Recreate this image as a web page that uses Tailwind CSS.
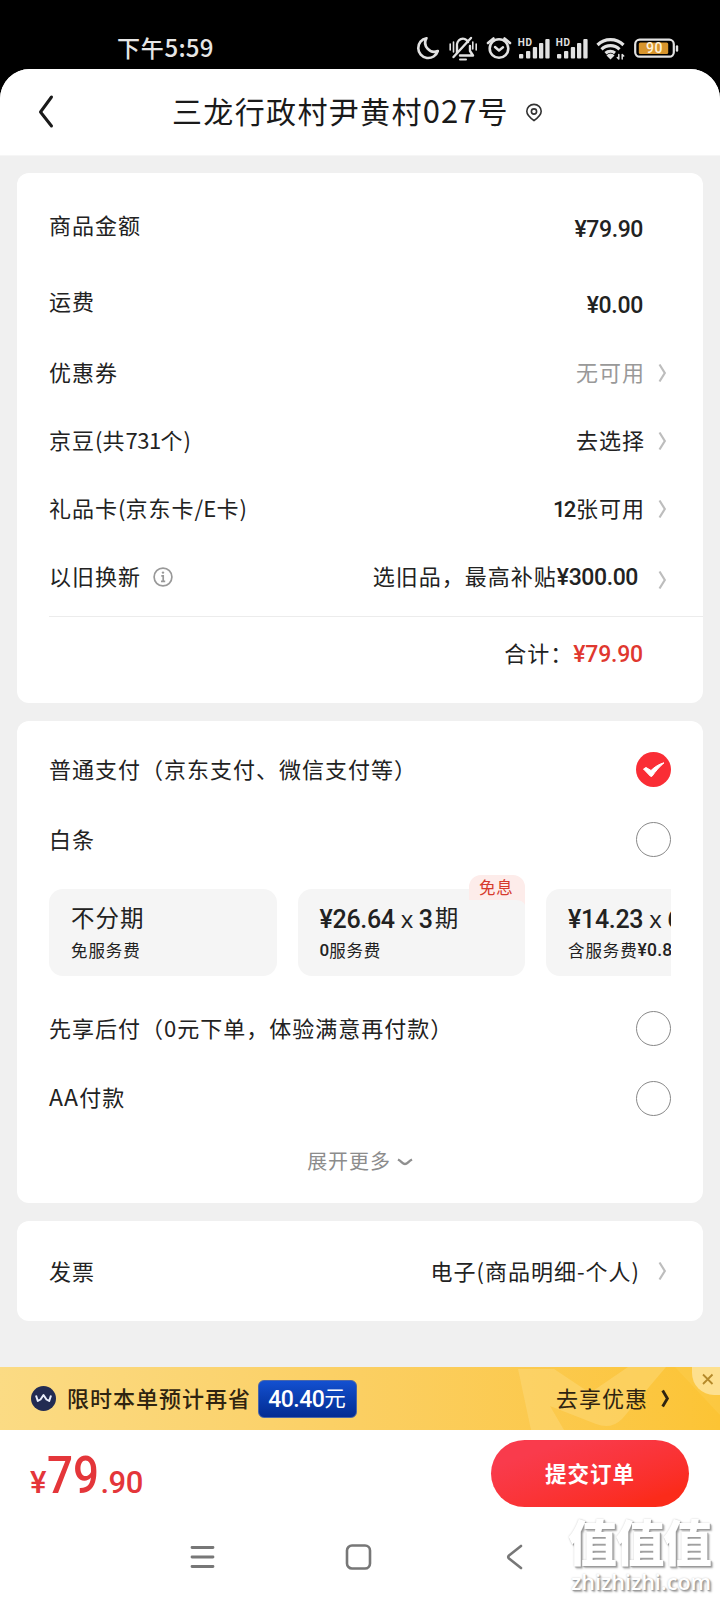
<!DOCTYPE html>
<html lang="zh-CN">
<head>
<meta charset="utf-8">
<title>提交订单</title>
<script src="https://cdn.jsdelivr.net/npm/@tailwindcss/browser@4"></script>
</head>
<body class="bg-black">
<svg class="hidden">
  <symbol id="chev" viewBox="0 0 9 20"><path d="M1.500 1.500 L6.800 10 L1.500 18.500" fill="none" stroke="currentColor" stroke-width="2.200"/></symbol>
</svg>
<div class="relative w-[720px] h-[1600px] overflow-hidden flex flex-col bg-black text-[#222] text-[22px] tracking-[1px] leading-none whitespace-nowrap font-['Noto_Sans_CJK_SC',sans-serif]">

  <!-- status bar -->
  <div class="h-[69px] shrink-0 flex items-start justify-between pl-[117px] pr-[30px] pt-[30px]">
    <div class="h-[34px] flex items-center text-[#e6e6e6] text-[23px] tracking-[0.8px] font-medium">下午<span class="text-[24px] tracking-[0.200px]">5:59</span></div>
    <svg class="w-[280px] h-[40px]" viewBox="410 30 280 40" fill="none" stroke="#e2e2e2" stroke-width="2.6" stroke-linecap="round" stroke-linejoin="round">
      <path d="M426.5 38.2 A10 10 0 1 0 437.8 51 A9 9 0 0 1 426.5 38.2Z"/>
      <path d="M457 53 v-6 a6 7 0 0 1 11 -5 M470 46 v5 l3 4.500 h-13" stroke-width="2.400"/>
      <path d="M471 38 L453.500 57" stroke-width="2.400"/>
      <path d="M460 59.500 h6" stroke-width="2"/>
      <path d="M450.200 44 v6 M453.500 42 v10 M472.800 42 v7 M476.200 44 v6" stroke-width="1.600"/>
      <circle cx="499" cy="48.500" r="9.300"/>
      <path d="M495 47 L499 50.500 L503 47.300" stroke-width="2.400"/>
      <path d="M488 43 L493.500 38.500 M510 43 L504.500 38.500"/>
      <g stroke="none" fill="#e2e2e2">
        <text x="517.800" y="46" font-family="Roboto, sans-serif" font-size="10" font-weight="700" letter-spacing="0.600">HD</text>
        <rect x="519" y="54" width="4.300" height="4.500" rx="1"/><rect x="526" y="51" width="4.300" height="7.500" rx="1"/><rect x="532.800" y="47" width="4.300" height="11.500" rx="1"/><rect x="539" y="43" width="4.300" height="15.500" rx="1"/><rect x="545.300" y="39" width="4.300" height="19.500" rx="1"/>
        <text x="555.800" y="46" font-family="Roboto, sans-serif" font-size="10" font-weight="700" letter-spacing="0.600">HD</text>
        <rect x="557" y="54" width="4.300" height="4.500" rx="1"/><rect x="564" y="51" width="4.300" height="7.500" rx="1"/><rect x="570.800" y="47" width="4.300" height="11.500" rx="1"/><rect x="577" y="43" width="4.300" height="15.500" rx="1"/><rect x="583.300" y="39" width="4.300" height="19.500" rx="1"/>
      </g>
      <path d="M597.500 45 A18.500 18.500 0 0 1 623.500 45 M601.500 49.300 A13 13 0 0 1 619.500 49.300 M605.500 53.300 A7.500 7.500 0 0 1 615 53" stroke-width="3.200" stroke-linecap="butt"/>
      <path d="M606.500 55.500 L610.500 59.500 L614.500 55.500 A5 5 0 0 0 606.500 55.500Z" fill="#e2e2e2" stroke="none"/>
      <path d="M618.800 54.500 v4.500 l-1.500 -1.500 M622.200 59 v-4.500 l1.500 1.500" stroke-width="1.500"/>
      <rect x="635.200" y="39.700" width="38.600" height="17" rx="4.500" stroke-width="2.200"/>
      <rect x="638.800" y="42.500" width="29.400" height="11.500" rx="1.500" fill="#d8952c" stroke="none"/>
      <path d="M677 46.500 v4" stroke-width="2.400"/>
      <text x="646" y="53" font-family="Roboto, sans-serif" font-size="14" font-weight="500" letter-spacing="0.600" fill="#fff3dc" stroke="none">90</text>
    </svg>
  </div>

  <div class="flex-1 flex flex-col rounded-t-[30px] bg-[#f0f0f0] overflow-hidden">
    <!-- header -->
    <div class="h-[87px] shrink-0 bg-white flex items-center pl-[38px] border-b border-[#f6f6f6]">
      <svg class="w-[16px] h-[36px] mt-[-1px]" viewBox="0 0 16 36" fill="none" stroke="#1a1a1a" stroke-width="3" stroke-linecap="round" stroke-linejoin="round"><path d="M13.500 3 L2.500 18 L13.500 32"/></svg>
      <div class="ml-[118px] pb-[5px] text-[30px] tracking-[1.350px] text-[#1a1a1a]">三龙行政村尹黄村<span class="tracking-[1px] text-[31px]">027</span>号</div>
      <svg class="ml-[16px] mt-px w-[18px] h-[20px]" viewBox="0 0 18 20" fill="none" stroke="#333" stroke-width="1.600"><path d="M9 17.500 C5 14.800 1.800 12 1.800 8.300 A7.200 6.900 0 0 1 16.200 8.300 C16.200 12 13 14.800 9 17.500Z"/><circle cx="9" cy="8.500" r="2.600"/></svg>
    </div>

    <div class="flex flex-col gap-[18px] pt-[17px] px-[17px]">
      <!-- amounts -->
      <div class="h-[530px] bg-white rounded-[12px] pl-[32px] pt-[16px] flex flex-col">
        <div class="h-[75px] flex items-center justify-between pr-[60px]"><span class="pb-[6px]">商品金额</span><span class="mt-[6px] font-['Roboto'] font-medium text-[23px] tracking-[-0.400px]">¥79.90</span></div>
        <div class="h-[75px] flex items-center justify-between pr-[60px]"><span class="pb-[4px]">运费</span><span class="mt-[7px] font-['Roboto'] font-medium text-[23px] tracking-[-0.300px]">¥0.00</span></div>
        <div class="h-[68px] flex items-center"><span class="pb-1">优惠券</span><span class="ml-auto pb-1 text-[#999]">无可用</span><svg class="ml-[13px] mr-[36px] w-[9px] h-[20px] text-[#bdbdbd]"><use href="#chev"/></svg></div>
        <div class="h-[68px] flex items-center"><span class="pb-1">京豆<span class="tracking-[0px]">(</span>共<span class="tracking-[-0.500px]">731</span>个)</span><span class="ml-auto pb-1">去选择</span><svg class="ml-[13px] mr-[36px] w-[9px] h-[20px] text-[#bdbdbd]"><use href="#chev"/></svg></div>
        <div class="h-[68px] flex items-center"><span class="pb-1">礼品卡<span class="tracking-[0px]">(</span>京东卡<span class="tracking-[0.200px]">/E</span>卡)</span><span class="ml-auto flex items-center"><span class="font-['Roboto'] font-medium tracking-[-1.800px] mr-[1.500px] mt-px">12</span><span class="pb-1">张可用</span></span><svg class="ml-[13px] mr-[36px] w-[9px] h-[20px] text-[#bdbdbd]"><use href="#chev"/></svg></div>
        <div class="h-[68px] flex items-center"><span class="pb-1">以旧换新</span>
          <svg class="ml-[12px] w-[20px] h-[20px]" viewBox="0 0 20 20" fill="none" stroke="#999" stroke-width="1.700"><circle cx="10" cy="10" r="8.900"/><path d="M8.300 8.800 h1.900 v5.700 M8 14.300 h4.200"/><circle cx="10" cy="5.600" r="1.200" fill="#999" stroke="none"/></svg>
          <span class="ml-auto flex items-center"><span class="pb-1">选旧品，最高补贴</span><span class="font-['Roboto'] font-medium text-[23px] tracking-[-0.400px]">¥300.00</span></span><svg class="ml-[20px] mr-[36px] mt-[6px] w-[9px] h-[20px] text-[#bdbdbd]"><use href="#chev"/></svg></div>
        <div class="mt-[5px] h-px bg-[#ececec]"></div>
        <div class="h-[74px] flex items-center justify-end pr-[60px]"><span class="pb-[5px]">合计：</span><span class="mt-px font-['Roboto'] font-medium text-[23px] tracking-[-0.200px] text-[#e0382f]">¥79.90</span></div>
      </div>

      <!-- payment methods -->
      <div class="h-[482px] bg-white rounded-[12px] px-[32px] pt-[13px] flex flex-col">
        <div class="h-[70px] flex items-center justify-between"><span class="pb-[3px]">普通支付（京东支付、微信支付等）</span>
          <svg class="w-[35px] h-[35px]" viewBox="0 0 35 35"><circle cx="17.500" cy="17.500" r="17.500" fill="#fa2d35"/><path d="M7.500 17 L10 15.500 L15 18.500 C19 14.800 23 12 28 10.800 C23.500 14.500 19.500 19.300 16 24.300 L14.500 24.300 Z" fill="#fff" stroke="#fff" stroke-width="1" stroke-linejoin="round"/></svg></div>
        <div class="h-[70px] flex items-center justify-between"><span class="pb-[3px]">白条</span><span class="w-[35px] h-[35px] rounded-full border border-[#888]"></span></div>
        <div class="h-[124px] -mt-[1px] pt-[16px] flex gap-[21px] overflow-hidden">
          <div class="w-[227.500px] h-[87px] shrink-0 rounded-[14px] bg-[#f5f5f5] pl-[22px] pt-[16px] flex flex-col">
            <div class="h-[26px] flex items-center text-[23.500px] tracking-[1px]">不分期</div>
            <div class="h-[26px] mt-[6px] flex items-center text-[16.500px] tracking-[0.900px]">免服务费</div>
          </div>
          <div class="relative w-[227.500px] h-[87px] shrink-0 rounded-[14px] bg-[#f5f5f5] pl-[22px] pt-[16px] flex flex-col">
            <div class="h-[26px] flex items-center text-[23.500px] tracking-[0.500px]"><span class="mt-[3px] font-['Roboto'] font-medium text-[25px] tracking-[-0.300px]">¥26.64&nbsp;<span class="font-normal font-['Open_Sans'] text-[24px]">x</span>&nbsp;3</span><span class="ml-[2px]">期</span></div>
            <div class="h-[26px] mt-[6px] flex items-center text-[16.500px] tracking-[0.800px]"><span class="font-['Roboto'] font-medium tracking-[0px] text-[17px]">0</span>服务费</div>
            <div class="absolute right-0 -top-[14px] w-[56px] h-[30px]">
              <svg class="absolute inset-0 w-[56px] h-[30px]" viewBox="0 0 56 30"><path d="M12 0 H44 A12 12 0 0 1 56 12 V30 Q54 25 46 25 H0 V12 A12 12 0 0 1 12 0Z" fill="#fdecea"/></svg>
              <div class="relative h-[24px] pl-[10px] flex items-center text-[16.500px] tracking-[0.700px] text-[#d63a2d]">免息</div>
            </div>
          </div>
          <div class="w-[227.500px] h-[87px] shrink-0 rounded-[14px] bg-[#f5f5f5] pl-[22px] pt-[16px] flex flex-col">
            <div class="h-[26px] flex items-center text-[23.500px]"><span class="mt-[3px] font-['Roboto'] font-medium text-[25px] tracking-[-0.300px]">¥14.23&nbsp;<span class="font-normal font-['Open_Sans'] text-[24px]">x</span>&nbsp;6</span>期</div>
            <div class="h-[26px] mt-[6px] flex items-center text-[16.500px] tracking-[0.900px]">含服务费<span class="mt-[2px] font-['Roboto'] font-medium text-[17.500px] tracking-[0.200px]">¥0.80</span></div>
          </div>
        </div>
        <div class="h-[70px] mt-[-4px] flex items-center justify-between"><span class="pb-[3px]">先享后付（0元下单，体验满意再付款）</span><span class="w-[35px] h-[35px] rounded-full border border-[#888]"></span></div>
        <div class="h-[70px] flex items-center justify-between"><span class="pb-[3px]"><span class="text-[23px] tracking-[1.200px]">AA</span>付款</span><span class="w-[35px] h-[35px] rounded-full border border-[#888]"></span></div>
        <div class="h-[56px] mt-px flex items-center justify-center text-[20px] tracking-[0.900px] text-[#8c8c8c]"><span class="pb-[2px]">展开更多</span><svg class="ml-[6px] w-[16px] h-[8px]" viewBox="0 0 16 8" fill="none" stroke="#8f8f8f" stroke-width="2.400"><path d="M1 1.500 C5 3.500 5.500 6 8 6 C10.500 6 11 3.500 15 1.500"/></svg></div>
      </div>

      <!-- invoice -->
      <div class="h-[100px] bg-white rounded-[12px] pl-[32px] flex items-center"><span class="pb-[3px]">发票</span><span class="ml-auto pb-[3px]">电子(商品明细-个人)</span><svg class="ml-[18px] mr-[36px] w-[9px] h-[20px] text-[#bdbdbd]"><use href="#chev"/></svg></div>
    </div>

    <!-- savings banner -->
    <div class="relative mt-auto h-[63px] shrink-0 overflow-hidden bg-linear-to-r from-[#fbdb84] via-[#fbcf62] to-[#fcc434] flex items-center pl-[31px]">
      <svg class="absolute right-0 top-0 w-[220px] h-[63px]" viewBox="0 0 220 63"><path d="M18 2 H54 L90 26 L128 0 H166 L122 52 Q111 63 96 57 L50 39 L64 63 H31Z" fill="#fddc80" opacity=".45"/><path d="M175 0 L220 48 V0Z" fill="#fdd05a" opacity=".35"/></svg>
      <svg class="w-[25px] h-[25px]" viewBox="0 0 25 25"><circle cx="12.500" cy="12.500" r="12.500" fill="#222b52"/><path d="M5 9.500 L6.800 15 L9.500 13.500 L12.500 9 L15.500 13.500 L18.200 15 L20 9.500" fill="none" stroke="#e9eefc" stroke-width="2" stroke-linejoin="round"/></svg>
      <span class="ml-[11px] pb-[3px] font-medium text-[#2f2410]">限时本单预计再省</span>
      <span class="ml-[7px] w-[99px] h-[38px] rounded-[6px] bg-linear-to-b from-[#1350d0] to-[#042c92] border border-[#4a66a8] flex items-center justify-center text-white"><span class="mt-[2px] font-['Roboto'] font-medium text-[23px] tracking-[-0.500px]">40.40</span><span class="pb-[3px] text-[21.500px]">元</span></span>
      <span class="relative ml-auto pb-[4px] text-[#2f2410]">去享优惠</span>
      <svg class="relative ml-[13px] mr-[50px] w-[9px] h-[19px]" viewBox="0 0 9 20" fill="none" stroke="#2f2410" stroke-width="3"><path d="M1.500 1.500 L6.500 10 L1.500 18.500"/></svg>
      <svg class="absolute right-0 top-0 w-[28px] h-[29px]" viewBox="0 0 28 29"><path d="M0 0 V6 A22 22 0 0 0 22 28 H28 V0Z" fill="#fde08f"/><path d="M11 7.500 L20.500 17 M20.500 7.500 L11 17" stroke="#b58a2a" stroke-width="1.800"/></svg>
    </div>

    <!-- pay bar -->
    <div class="h-[88px] shrink-0 bg-white flex items-start justify-between pl-[30px] pr-[31px]">
      <div class="mt-[21px] flex items-baseline font-['Roboto'] font-medium text-[#e4363a] leading-[50px]"><span class="text-[31px] tracking-[0px]">¥</span><span class="w-[53px] ml-[1px] text-[52px] tracking-[0px] scale-x-[0.88] origin-left">79</span><span class="text-[31px] tracking-[-0.500px]">.90</span></div>
      <div class="mt-[10px] w-[198px] h-[67px] rounded-full bg-linear-to-br from-[#f93b4c] from-20% to-[#fb2b1a] to-85% flex items-center justify-center text-white"><span class="pb-[2px] font-bold text-[21.500px]">提交订单</span></div>
    </div>

    <!-- system navigation -->
    <div class="h-[82px] shrink-0 bg-white flex items-start pl-[190px] pt-[25px]">
      <svg class="w-[25px] h-[28px]" viewBox="0 0 25 28" stroke="#777" stroke-width="2.800" stroke-linecap="round"><path d="M2 4.500 H23 M2 14 H23 M2 23.500 H23"/></svg>
      <svg class="ml-[130px] w-[27px] h-[28px]" viewBox="0 0 27 28" fill="none" stroke="#777" stroke-width="2.600"><rect x="2" y="2.500" width="23" height="23" rx="5"/></svg>
      <svg class="ml-[134px] w-[18px] h-[28px]" viewBox="0 0 18 28" fill="none" stroke="#777" stroke-width="2.600" stroke-linecap="round" stroke-linejoin="round"><path d="M15 3 L3 12.500 Q1.500 14 3 15.500 L15 25"/></svg>
    </div>
  </div>

  <!-- site watermark -->
  <div class="absolute left-[568px] top-[1515px] flex flex-col items-start text-white [text-shadow:1px_1px_1px_#999,2px_2px_2px_#aaa,0px_0px_2px_#ccc]">
    <div class="h-[50px] leading-[50px] text-[49px] tracking-[-1.500px] font-black">值值值</div>
    <div class="h-[26px] leading-[26px] mt-[4px] pl-[3px] text-[21.500px] tracking-[0px] font-semibold font-['Open_Sans']">zhizhizhi.com</div>
  </div>
</div>
</body>
</html>
